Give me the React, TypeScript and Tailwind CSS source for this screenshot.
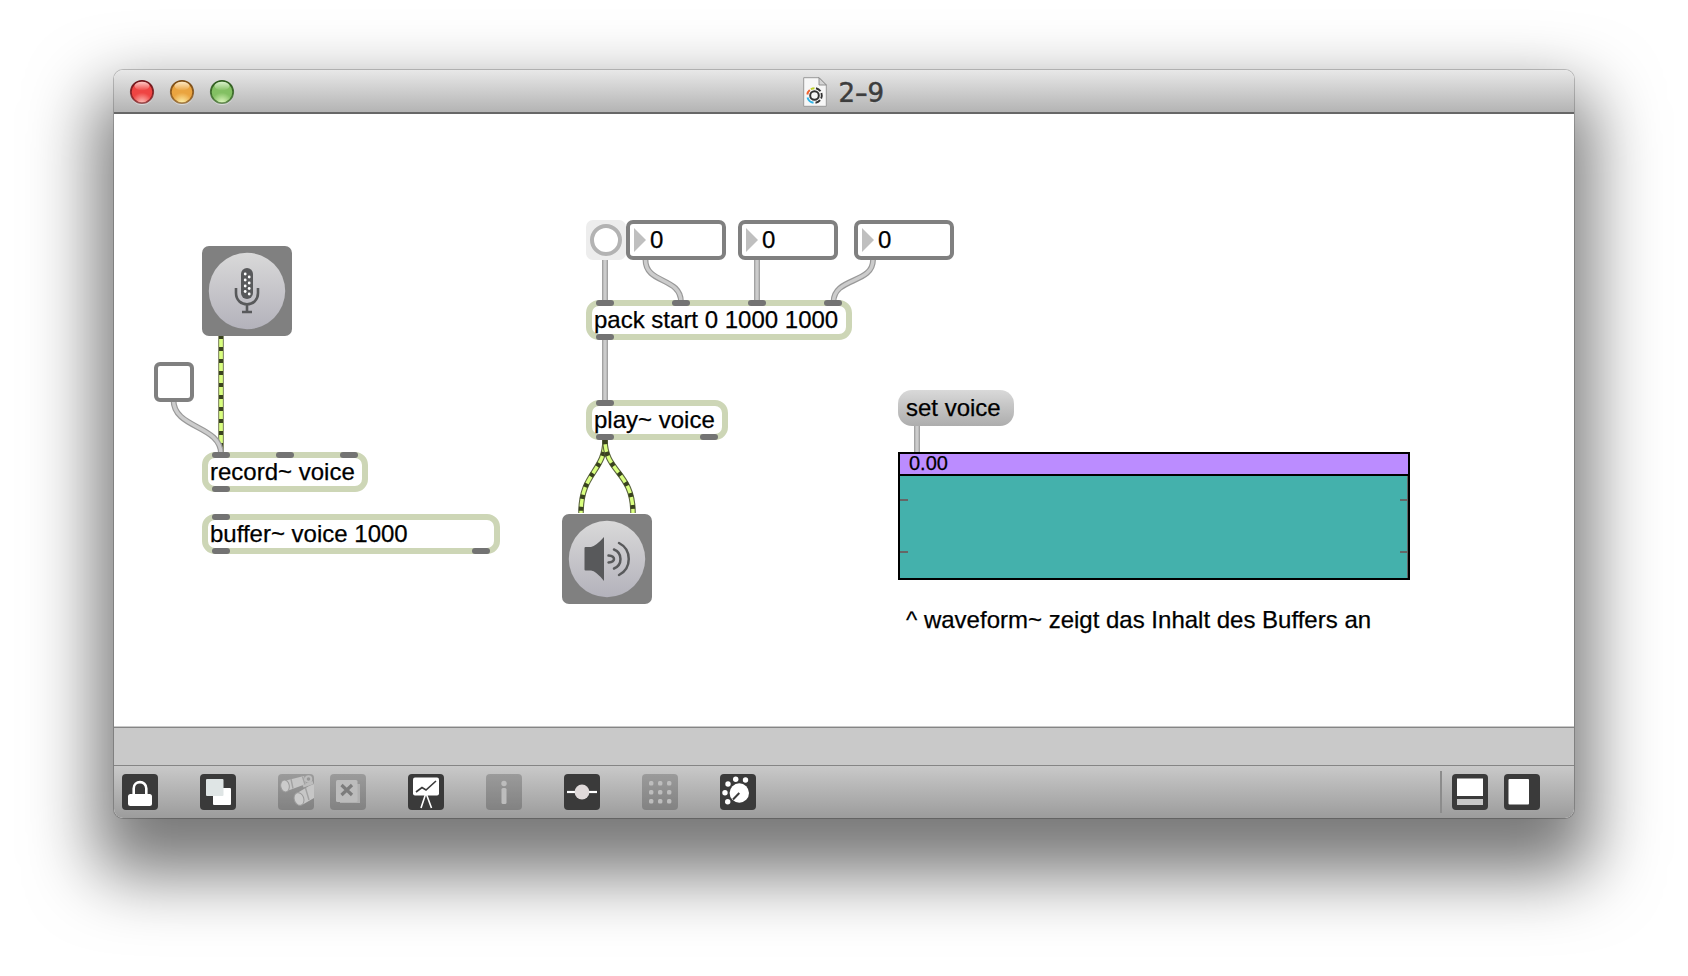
import React from "react";

const TOP_ROWS = "absolute -top-[6px] h-[6px] w-[18px] rounded-[3px] bg-[#737373]";
const BOTTOM_ROWS = "absolute -bottom-[6px] h-[6px] w-[18px] rounded-[3px] bg-[#737373]";

function ObjectBox({ place, text, inlets, outlets }: { place: string; text: string; inlets: number[]; outlets: number[] }) {
  return (
    <div className={`absolute h-[40px] rounded-[13px] border-[6px] border-[#cdd6b6] bg-white pt-px pl-[2px] ${place}`}>
      <span className="block text-[24px] leading-[26px] whitespace-pre text-black">{text}</span>
      {inlets.map((x) => (
        <i key={x} className={TOP_ROWS} style={{ left: x - 6 }} />
      ))}
      {outlets.map((x) => (
        <i key={x} className={BOTTOM_ROWS} style={{ left: x - 6 }} />
      ))}
    </div>
  );
}

function NumberBox({ place }: { place: string }) {
  return (
    <div className={`absolute top-[106px] flex h-[40px] w-[100px] items-center rounded-[7px] border-[4px] border-[#808080] bg-white pl-[4px] ${place}`}>
      <svg className="h-[24px] w-[12px]" viewBox="0 0 12 24">
        <path d="M0 0L12 12L0 24Z" fill="#bfbfbf" />
      </svg>
      <span className="ml-[4px] text-[24px] leading-[26px] text-black">0</span>
    </div>
  );
}

function Cords() {
  const gray = [
    "M59.5 286C59.5 315 107 311 107 340",
    "M491 146V188",
    "M531.5 146C531.5 170 567 163 567 188",
    "M643 146V188",
    "M759 146C759 170 719.5 163 719.5 188",
    "M491 224V290",
    "M803 310V338",
  ];
  const fan = ["M491 326C491 358 467 358 467 399", "M491 326C491 358 519 358 519 399"];
  return (
    <svg className="absolute top-0 left-0 h-[612px] w-[1460px]" viewBox="0 0 1460 612" fill="none">
      <path d="M107 222V340" stroke="#8b9070" strokeWidth="6" />
      <path d="M107 222V340" stroke="#d9ff7f" strokeWidth="3.6" />
      <path d="M107 221V340" stroke="#39421f" strokeWidth="4" strokeDasharray="4 8" />
      {fan.map((d) => (
        <g key={d}>
          <path d={d} stroke="#5c6540" strokeWidth="5.600" />
          <path d={d} stroke="#d9ff7f" strokeWidth="3.400" />
          <path d={d} stroke="#39421f" strokeWidth="4.600" strokeDasharray="4 8" />
        </g>
      ))}
      {gray.map((d) => (
        <g key={d}>
          <path d={d} stroke="#999999" strokeWidth="5.800" />
          <path d={d} stroke="#cccccc" strokeWidth="3.400" />
        </g>
      ))}
    </svg>
  );
}

function Microphone() {
  const holes = [[44, 28], [48, 31], [44, 34], [48, 37], [44, 40], [48, 42.500], [44, 45.500], [48, 48]];
  return (
    <svg className="absolute top-[132px] left-[88px] size-[90px]" viewBox="0 0 90 90" fill="none">
      <defs>
        <linearGradient id="mic" x1="0" y1="0" x2="0" y2="1">
          <stop stopColor="#d9d9d9" />
          <stop offset="1" stopColor="#b3b2bb" />
        </linearGradient>
      </defs>
      <rect width="90" height="90" rx="7" fill="#808080" />
      <circle cx="45" cy="45" r="38.200" fill="url(#mic)" />
      <rect x="39" y="22" width="12" height="31" rx="6" fill="#58595b" />
      {holes.map(([x, y]) => (
        <circle key={y} cx={x - 0.800} cy={y} r="1.400" fill="#fff" />
      ))}
      <path d="M34 42V47C34 62 56 62 56 47V42" stroke="#58595b" strokeWidth="2.600" />
      <path d="M45 58V66M40 66H50" stroke="#58595b" strokeWidth="2.600" />
    </svg>
  );
}

function Speaker() {
  return (
    <svg className="absolute top-[400px] left-[448px] size-[90px]" viewBox="0 0 90 90" fill="none">
      <defs>
        <linearGradient id="spk" x1="0" y1="0" x2="0" y2="1">
          <stop stopColor="#d9d9d9" />
          <stop offset="1" stopColor="#b3b2bb" />
        </linearGradient>
      </defs>
      <rect width="90" height="90" rx="7" fill="#808080" />
      <circle cx="45" cy="45" r="38.200" fill="url(#spk)" />
      <path d="M23.500 33H29Q34 32 42 23V67Q34 57 29 56.500H23.500Q22.500 56.500 22.500 55.500V34Q22.500 33 23.500 33Z" fill="#58595b" />
      <g stroke="#58595b" strokeWidth="2.500" strokeLinecap="round">
        <path d="M46.500 41.500Q52 42 52 45Q52 48 46.500 48.500" />
        <path d="M52 35.500A10.200 10.200 0 0 1 52 54.500" />
        <path d="M57 29A18 18 0 0 1 57 61" />
      </g>
    </svg>
  );
}

function Waveform() {
  return (
    <div className="absolute top-[338px] left-[784px] flex h-[128px] w-[512px] flex-col border-2 border-black bg-[#44b1ac]">
      <div className="h-[22px] border-b-2 border-black bg-[#bb8cff] pl-[9px] text-[20px] leading-[18px] text-black">0.00</div>
      <div className="flex flex-1 justify-between border-r border-[#646464]">
        <div className="mt-[23px] h-[54px] w-[8px] border-y-2 border-[#666]" />
        <div className="mt-[23px] h-[54px] w-[7px] border-y-2 border-[#666]" />
      </div>
    </div>
  );
}

function Patch() {
  return (
    <div className="relative h-[612px] overflow-hidden bg-white [-webkit-text-stroke:0.25px_#000]">
      <Cords />
      <Microphone />
      <div className="absolute top-[248px] left-[40px] size-[40px] rounded-[6px] border-[4px] border-[#808080] bg-white" />
      <ObjectBox place="left-[88px] top-[338px] w-[166px]" text="record~ voice" inlets={[10, 74, 138]} outlets={[10]} />
      <ObjectBox place="left-[88px] top-[400px] w-[298px]" text="buffer~ voice 1000" inlets={[10]} outlets={[10, 270]} />
      <div className="absolute top-[106px] left-[472px] flex size-[40px] items-center justify-center rounded-[7px] bg-[#ededed]">
        <div className="size-[32px] rounded-full border-[4px] border-[#b3b3b3] bg-white" />
      </div>
      <NumberBox place="left-[512px]" />
      <NumberBox place="left-[624px]" />
      <NumberBox place="left-[740px]" />
      <ObjectBox place="left-[472px] top-[186px] w-[266px]" text="pack start 0 1000 1000" inlets={[10, 86, 162, 238]} outlets={[10]} />
      <ObjectBox place="left-[472px] top-[286px] w-[142px]" text="play~ voice" inlets={[10]} outlets={[10, 114]} />
      <Speaker />
      <div className="absolute top-[276px] left-[784px] h-[36px] w-[116px] rounded-[14px] bg-linear-to-b from-[#d9d9d9] to-[#adadad] pl-[8px] text-[24px] leading-[36px] whitespace-pre text-black">
        set voice
      </div>
      <Waveform />
      <p className="absolute top-[490px] left-[792px] text-[24px] leading-[32px] whitespace-pre text-black">^ waveform~ zeigt das Inhalt des Buffers an</p>
    </div>
  );
}

function Light({ rim, base, glow, gloss }: { rim: string; base: string; glow: string; gloss: string }) {
  return (
    <svg className="size-[26px]" viewBox="0 0 26 26">
      <defs>
        <radialGradient id={`l${base.slice(1)}`} cx=".5" cy="1" r=".85">
          <stop stopColor={glow} />
          <stop offset=".55" stopColor={base} />
          <stop offset="1" stopColor={base} />
        </radialGradient>
        <linearGradient id={`r${base.slice(1)}`} x1="0" y1="0" x2="0" y2="1">
          <stop stopColor={rim} />
          <stop offset="1" stopColor={rim} stopOpacity=".65" />
        </linearGradient>
        <linearGradient id={`g${base.slice(1)}`} x1="0" y1="0" x2="0" y2="1">
          <stop stopColor={gloss} stopOpacity=".9" />
          <stop offset="1" stopColor={gloss} stopOpacity=".05" />
        </linearGradient>
      </defs>
      <circle cx="13" cy="14" r="12" fill="#fff" fillOpacity=".45" />
      <circle cx="13" cy="13" r="11.200" fill={`url(#l${base.slice(1)})`} stroke={`url(#r${base.slice(1)})`} strokeWidth="1.800" />
      <ellipse cx="13" cy="7" rx="7.500" ry="4.200" fill={`url(#g${base.slice(1)})`} />
    </svg>
  );
}

function TitleBar() {
  return (
    <header className="relative flex h-[44px] items-center justify-center border-b-2 border-[#676767] bg-linear-to-b from-[#e8e8e8] to-[#b4b4b4] pt-[2px]">
      <div className="absolute top-[9px] left-[15px] flex gap-[14px]">
        <Light rim="#6e1418" base="#ef4543" glow="#ffc4bd" gloss="#ffd5d2" />
        <Light rim="#7a4a12" base="#eaa440" glow="#fff3ae" gloss="#fff0d2" />
        <Light rim="#2c5a1c" base="#83c063" glow="#e4fbc4" gloss="#e2f6d6" />
      </div>
      <div className="flex items-center gap-[12px]">
        <svg className="h-[30px] w-[24px]" viewBox="0 0 24 30" fill="none">
          <path d="M.7.7H16L23.300 8V29.300H.7Z" fill="#f7f7f7" stroke="#999" />
          <path d="M16 .7V8H23.300Z" fill="#d5d5d5" stroke="#888" strokeWidth=".9" />
          <circle cx="11.500" cy="18.500" r="4.300" stroke="#333" strokeWidth="2" />
          <g strokeWidth="1.900">
            <path d="M7.800 12.200A7.300 7.300 0 0 1 11.500 11.200" stroke="#bfd02b" />
            <path d="M4.300 17.500A7.300 7.300 0 0 1 6.800 13" stroke="#f0622d" />
            <path d="M4.500 20.500A7.300 7.300 0 0 0 10.500 25.800" stroke="#2fb4e6" />
            <path d="M13 11.300A7.300 7.300 0 0 1 17.500 14.300M18.400 16A7.300 7.300 0 0 1 18.100 21.500M17.100 23.200A7.300 7.300 0 0 1 12.500 25.800" stroke="#333" />
          </g>
        </svg>
        <span className="pt-px font-['DejaVu_Sans',sans-serif] text-[26px] leading-[30px] tracking-[1.5px] text-[#3d3d3d] [-webkit-text-stroke:0.5px_#3d3d3d] [text-shadow:0_1px_0_rgba(255,255,255,0.5)]">
          2<span className="inline-block scale-x-[1.4]">-</span>9
        </span>
      </div>
    </header>
  );
}

function Tool({ children, off = false, gap = "" }: { children: React.ReactNode; off?: boolean; gap?: string }) {
  return (
    <svg className={`size-[36px] shrink-0 ${gap}`} viewBox="0 0 36 36" fill="none">
      <rect width="36" height="36" rx="4" fill={off ? "#000" : "#3a3a3a"} fillOpacity={off ? 0.2 : 1} />
      {children}
    </svg>
  );
}

function ToolBar() {
  const grid = [9, 18, 27];
  return (
    <footer className="flex h-[52px] items-start bg-linear-to-b from-[#c9c9c9] to-[#9c9c9c] pt-[8px] pr-[34px] pl-[8px]">
      <Tool>
        <rect x="6" y="20" width="24" height="12" rx="2.500" fill="#fff" />
        <path d="M11.700 20.500V14.500C11.700 6 24.300 6 24.300 14.500V20.500" stroke="#fff" strokeWidth="2.600" />
      </Tool>
      <Tool gap="ml-[42px]">
        <rect x="13" y="14" width="18" height="17" rx="1" fill="#fff" />
        <rect x="6" y="5" width="17.500" height="17" rx="1" fill="#dfe5e5" />
      </Tool>
      <Tool off gap="ml-[42px]">
        <path d="M8 6.500L26 2L28 10L9 17Z" fill="#c6c6c6" />
        <path d="M20 18.500L31 12L36 10V24L24 31Z" fill="#c6c6c6" />
        <path d="M25 12L35 8.500" stroke="#bdbdbd" strokeWidth="3" />
        <path d="M13 5L15 14.500M24.500 2.500L27 10.500M27.500 14L31 26" stroke="#a2a2a2" strokeWidth="1.400" />
        <ellipse cx="7" cy="12" rx="4.300" ry="6" fill="#cbcbcb" stroke="#9a9a9a" transform="rotate(-12 7 12)" />
        <ellipse cx="21" cy="25" rx="4.800" ry="6.500" fill="#cbcbcb" stroke="#9a9a9a" transform="rotate(-18 21 25)" />
        <circle cx="30.500" cy="5" r="2.800" stroke="#bdbdbd" strokeWidth="2" />
      </Tool>
      <Tool off gap="ml-[16px]">
        <path d="M10 10H30V29H10Z" fill="#b0b0b0" />
        <rect x="6" y="6" width="21.500" height="22" rx="1.500" fill="#bcbcbc" />
        <path d="M11.500 11L22 21M22 11L11.500 21" stroke="#7c7c7c" strokeWidth="3.200" />
      </Tool>
      <Tool gap="ml-[42px]">
        <rect x="5" y="3.500" width="26" height="18" rx="2" fill="#fff" />
        <path d="M8 18L14 13.500L18 16L28 7" stroke="#3a3a3a" strokeWidth="1.600" />
        <path d="M17.300 21L13 34M18.700 21L23.500 34" stroke="#fff" strokeWidth="1.600" />
      </Tool>
      <Tool off gap="ml-[42px]">
        <circle cx="18" cy="9.500" r="2.700" fill="#bdbdbd" />
        <rect x="15.500" y="14" width="5" height="16" rx="1.500" fill="#bdbdbd" />
      </Tool>
      <Tool gap="ml-[42px]">
        <path d="M3 18H33" stroke="#fff" strokeWidth="2.200" />
        <circle cx="18" cy="18" r="7.400" fill="#e0dada" />
      </Tool>
      <Tool off gap="ml-[42px]">
        {grid.map((y) => grid.map((x) => <rect key={`${x}-${y}`} x={x - 2} y={y - 2} width="4.400" height="4.400" rx="1.500" fill="#bdbdbd" />))}
      </Tool>
      <Tool gap="ml-[42px]">
        <circle cx="19.300" cy="19" r="9.700" fill="#fff" />
        <path d="M19.300 19L13 25.500" stroke="#3a3a3a" strokeWidth="2" />
        <g fill="#fff">
          <circle cx="7.700" cy="27.700" r="2.700" />
          <circle cx="5" cy="18.700" r="2.700" />
          <circle cx="8" cy="10" r="2.700" />
          <circle cx="15.700" cy="5.300" r="2.700" />
          <circle cx="25.500" cy="6" r="2.700" />
        </g>
      </Tool>
      <div className="-mt-[3px] ml-auto h-[42px] w-[2px] bg-[#8c8c8c]" />
      <Tool gap="ml-[10px]">
        <rect x="5" y="4.500" width="26" height="17.500" fill="#fff" />
        <rect x="5" y="25" width="26" height="6" fill="#c6c6c6" />
      </Tool>
      <Tool gap="ml-[16px]">
        <rect x="4.500" y="5" width="20.500" height="25.500" rx="1" fill="#fff" />
      </Tool>
    </footer>
  );
}

export default function App() {
  return (
    <main className="h-[976px] w-[1688px] overflow-hidden bg-white px-[114px] pt-[70px] font-['Liberation_Sans',Arial,sans-serif]">
      <div className="rounded-[9px] shadow-[0_0_0_1px_rgba(0,0,0,0.2),0_39px_68px_18px_rgba(0,0,0,0.53)]">
        <div className="h-[748px] overflow-hidden rounded-[9px]">
          <TitleBar />
          <Patch />
          <div className="h-[40px] bg-[#c9c9c9] pt-px">
            <div className="h-[39px] border-t border-b border-[#858585]" />
          </div>
          <ToolBar />
        </div>
      </div>
    </main>
  );
}
